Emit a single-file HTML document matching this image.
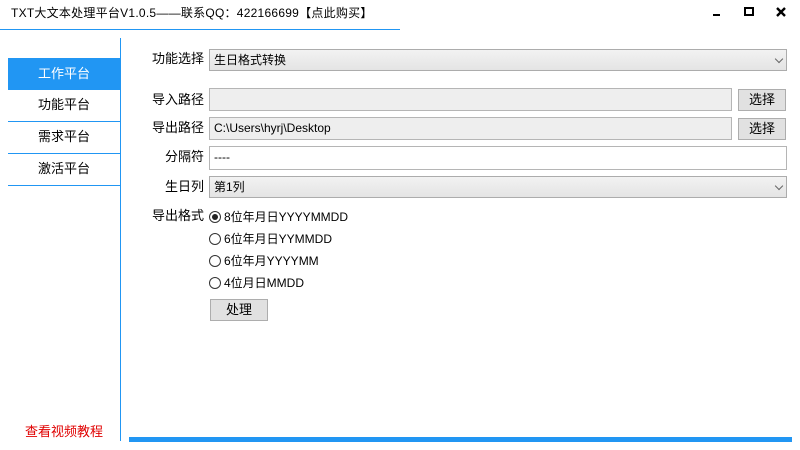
<!DOCTYPE html>
<html><head><meta charset="utf-8"><style>
*{margin:0;padding:0;box-sizing:border-box}
body{width:800px;height:450px;background:#fff;position:relative;overflow:hidden;font-family:"Liberation Sans","Noto Sans CJK SC",sans-serif;font-size:12px;color:#000}
.a{position:absolute}
.lbl{position:absolute;right:596px;font-size:13px;line-height:16px;white-space:nowrap}
.box{position:absolute;left:209px;border:1px solid #b5b5b5;background:#eee;font-size:12px;padding-left:4px;line-height:20px}
.sel{background:linear-gradient(#f2f2f2,#e4e4e4);border-color:#acacac}
.arrow{position:absolute;right:4px;top:6px;width:6px;height:6px;border-right:1.5px solid #666;border-bottom:1.5px solid #666;transform:rotate(45deg)}
.btn{position:absolute;border:1px solid #adadad;background:#e1e1e1;text-align:center;font-size:13px;line-height:19px}
.nav{position:absolute;left:8px;width:112px;text-align:center;font-size:13px;border-bottom:1px solid #2196f3}
.rad{position:absolute;left:209px;font-size:12px;line-height:14px;white-space:nowrap}
.rad i{display:inline-block;width:12px;height:12px;border:1px solid #333;border-radius:50%;vertical-align:-2px;margin-right:3px;position:relative}
.rad i.on::after{content:"";position:absolute;left:2px;top:2px;width:6px;height:6px;border-radius:50%;background:#222}
</style></head><body>
<div class="a" style="left:11px;top:5px;font-size:12px;line-height:16px;letter-spacing:0.25px">TXT大文本处理平台V1.0.5——联系QQ：422166699【点此购买】</div>
<div class="a" style="left:0;top:29px;width:400px;height:1px;background:#2196f3"></div>
<div class="a" style="left:713px;top:14px;width:7px;height:2px;background:#000"></div>
<div class="a" style="left:744px;top:7px;width:10px;height:9px;border:2px solid #000"></div>
<svg class="a" style="left:776px;top:7px" width="10" height="10"><path d="M1 1L9 9M9 1L1 9" stroke="#000" stroke-width="2.4"/></svg>
<div class="a" style="left:120px;top:38px;width:1px;height:403px;background:#2196f3"></div>
<div class="nav" style="top:58px;height:32px;line-height:32px;background:#2196f3;color:#fff;border:none">工作平台</div>
<div class="nav" style="top:90px;height:32px;line-height:30px">功能平台</div>
<div class="nav" style="top:122px;height:32px;line-height:30px">需求平台</div>
<div class="nav" style="top:154px;height:32px;line-height:30px">激活平台</div>
<div class="a" style="left:25px;top:421px;color:#e00000;font-size:13px">查看视频教程</div>
<div class="a" style="left:129px;top:437px;width:663px;height:5px;background:#2196f3"></div>

<div class="lbl" style="top:51px">功能选择</div>
<div class="box sel" style="top:49px;width:578px;height:22px">生日格式转换<span class="arrow"></span></div>
<div class="lbl" style="top:92px">导入路径</div>
<div class="box" style="top:88px;width:523px;height:23px"></div>
<div class="btn" style="left:738px;top:89px;width:48px;height:22px">选择</div>
<div class="lbl" style="top:120px">导出路径</div>
<div class="box" style="top:117px;width:523px;height:23px">C:\Users\hyrj\Desktop</div>
<div class="btn" style="left:738px;top:118px;width:48px;height:22px">选择</div>
<div class="lbl" style="top:149px">分隔符</div>
<div class="box" style="top:146px;width:578px;height:24px;background:#fff">----</div>
<div class="lbl" style="top:179px">生日列</div>
<div class="box sel" style="top:176px;width:578px;height:22px">第1列<span class="arrow"></span></div>
<div class="lbl" style="top:208px">导出格式</div>
<div class="rad" style="top:210px"><i class="on"></i>8位年月日YYYYMMDD</div>
<div class="rad" style="top:232px"><i></i>6位年月日YYMMDD</div>
<div class="rad" style="top:254px"><i></i>6位年月YYYYMM</div>
<div class="rad" style="top:276px"><i></i>4位月日MMDD</div>
<div class="btn" style="left:210px;top:299px;width:58px;height:22px">处理</div>
</body></html>
